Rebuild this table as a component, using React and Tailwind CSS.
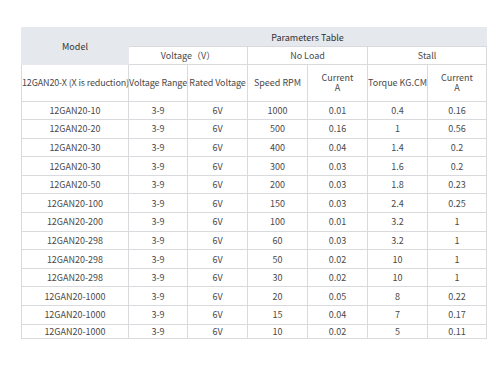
// App.jsx
// Motor parameters table: model list with voltage, no-load and stall figures.

import React from "react";

const rows = [
  ["12GAN20-10", "3-9", "6V", "1000", "0.01", "0.4", "0.16"],
  ["12GAN20-20", "3-9", "6V", "500", "0.16", "1", "0.56"],
  ["12GAN20-30", "3-9", "6V", "400", "0.04", "1.4", "0.2"],
  ["12GAN20-30", "3-9", "6V", "300", "0.03", "1.6", "0.2"],
  ["12GAN20-50", "3-9", "6V", "200", "0.03", "1.8", "0.23"],
  ["12GAN20-100", "3-9", "6V", "150", "0.03", "2.4", "0.25"],
  ["12GAN20-200", "3-9", "6V", "100", "0.01", "3.2", "1"],
  ["12GAN20-298", "3-9", "6V", "60", "0.03", "3.2", "1"],
  ["12GAN20-298", "3-9", "6V", "50", "0.02", "10", "1"],
  ["12GAN20-298", "3-9", "6V", "30", "0.02", "10", "1"],
  ["12GAN20-1000", "3-9", "6V", "20", "0.05", "8", "0.22"],
  ["12GAN20-1000", "3-9", "6V", "15", "0.04", "7", "0.17"],
  ["12GAN20-1000", "3-9", "6V", "10", "0.02", "5", "0.11"],
];

const cell = "border border-[#d8dadd] p-0 text-center align-middle";

const App = () => {
  return (
    <div className="h-[365px] w-[500px] bg-white pl-[21px] pt-[27px] font-['Noto_Sans_CJK_SC','Noto_Sans',sans-serif] text-[9px] leading-[11px] text-[#4a4a4a]">
      <table className="w-[465px] table-fixed border-collapse">
        <colgroup>
          <col className="w-[107px]" />
          <col className="w-[59px]" />
          <col className="w-[60px]" />
          <col className="w-[60px]" />
          <col className="w-[60px]" />
          <col className="w-[60px]" />
          <col className="w-[59px]" />
        </colgroup>
        <thead>
          {/* Gray title rows */}
          <tr className="h-[19px]">
            <th
              rowSpan={2}
              className={`${cell} border-[#e5e8ec] bg-[#e5e8ec] font-normal text-[#333]`}
            >
              Model
            </th>
            <th
              colSpan={6}
              className={`${cell} border-[#e5e8ec] border-b-[#d8dadd] bg-[#e5e8ec] font-normal text-[#333]`}
            >
              Parameters Table
            </th>
          </tr>
          <tr className="h-[18px]">
            <th colSpan={2} className={`${cell} font-normal`}>
              Voltage（V）
            </th>
            <th colSpan={2} className={`${cell} font-normal`}>
              No Load
            </th>
            <th colSpan={2} className={`${cell} font-normal`}>
              Stall
            </th>
          </tr>
          <tr className="h-[36.5px]">
            <th className={`${cell} whitespace-nowrap font-normal tracking-[-0.15px]`}>
              12GAN20-X (X is reduction)
            </th>
            <th className={`${cell} whitespace-nowrap font-normal tracking-[-0.1px]`}>
              Voltage Range
            </th>
            <th className={`${cell} whitespace-nowrap font-normal tracking-[-0.1px]`}>
              Rated Voltage
            </th>
            <th className={`${cell} whitespace-nowrap font-normal`}>Speed RPM</th>
            <th className={`${cell} font-normal leading-[10px]`}>
              Current
              <br />A
            </th>
            <th className={`${cell} whitespace-nowrap font-normal`}>
              Torque KG.CM
            </th>
            <th className={`${cell} font-normal leading-[10px]`}>
              Current
              <br />A
            </th>
          </tr>
        </thead>
        <tbody>
          {rows.map((r, i) => (
            <tr
              key={i}
              className={i === rows.length - 1 ? "h-[14px]" : "h-[18.6px]"}
            >
              {r.map((v, j) => (
                <td key={j} className={cell}>
                  {v}
                </td>
              ))}
            </tr>
          ))}
        </tbody>
      </table>
    </div>
  );
};

export default App;
